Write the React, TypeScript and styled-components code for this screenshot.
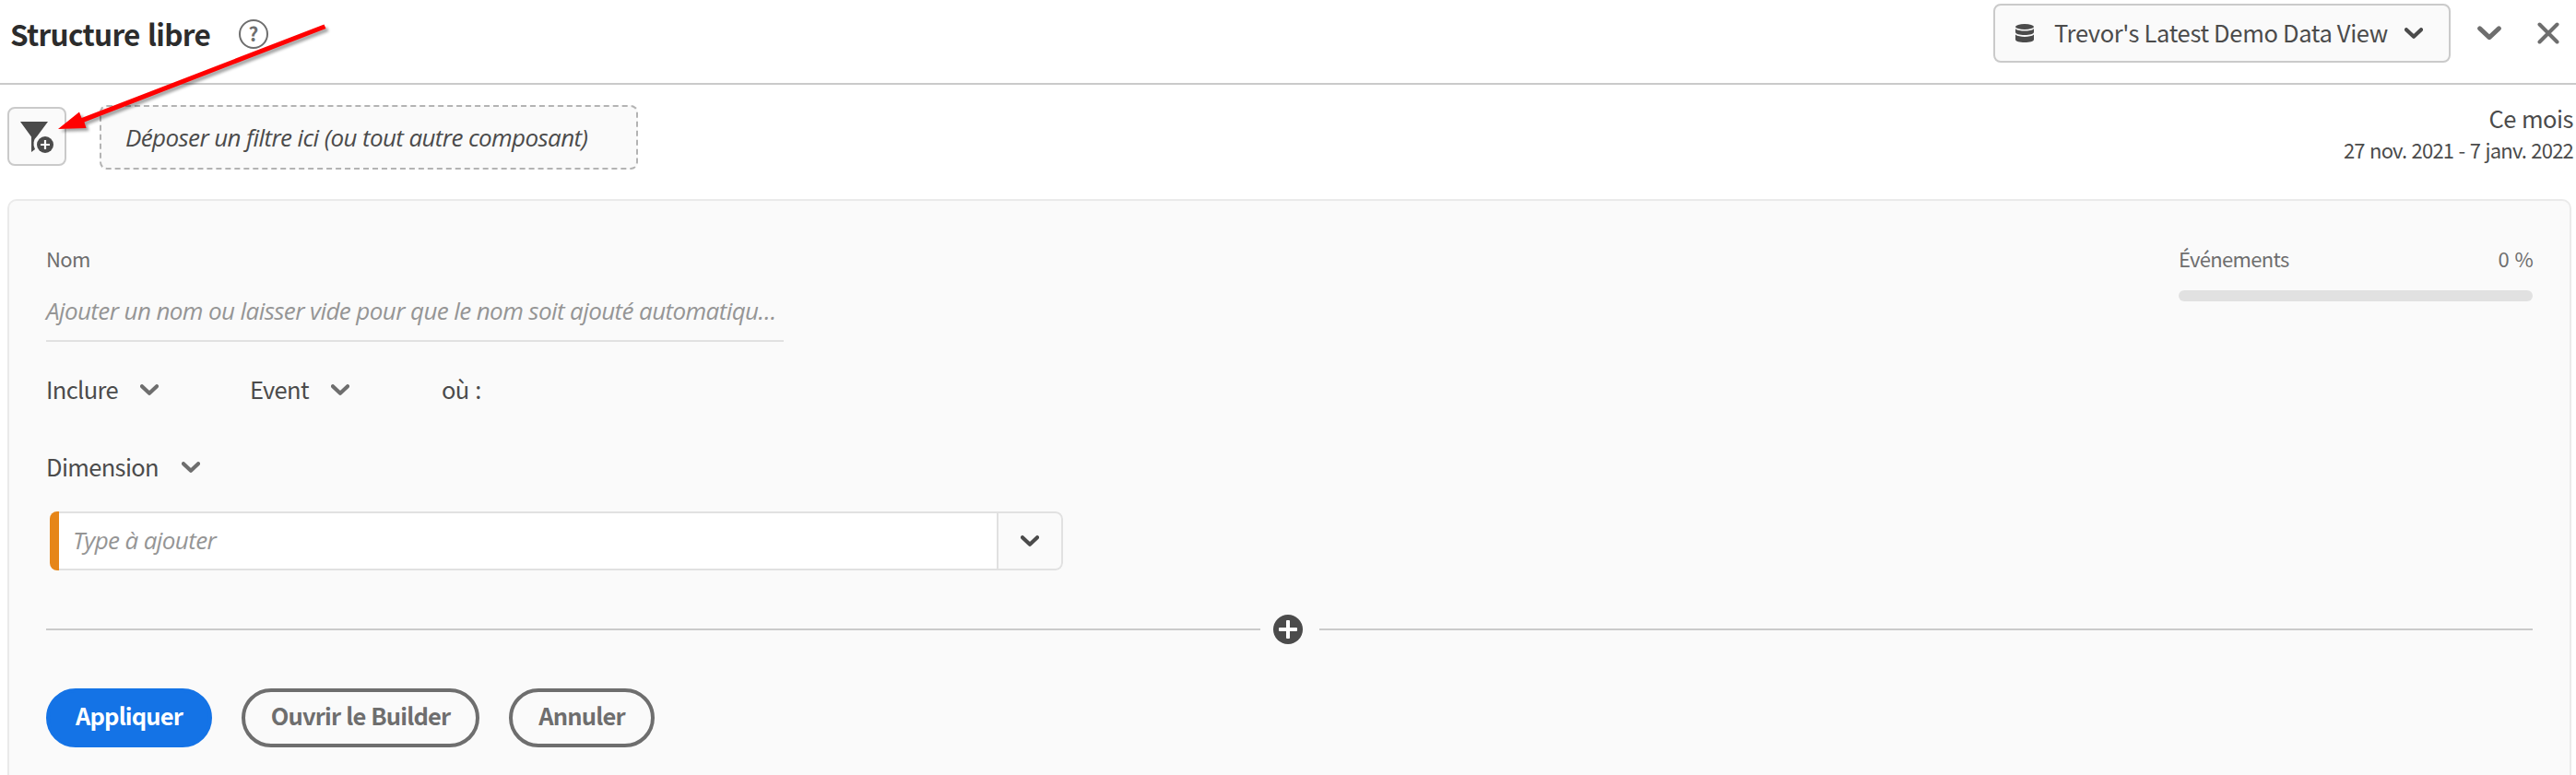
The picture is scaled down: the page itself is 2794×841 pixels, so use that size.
import React from 'react';
import styled, { createGlobalStyle, css } from 'styled-components';

const GlobalStyle = createGlobalStyle`
  *, *::before, *::after { box-sizing: border-box; }
  body {
    margin: 0;
    background: #fff;
    color: #4b4b4b;
    font-family: "Noto Sans CJK JP", "Noto Sans", sans-serif;
    overflow: hidden;
  }
  svg { display: block; flex: none; }
`;

const italicText = css`
  font-family: "Open Sans", "Noto Sans", sans-serif;
  font-size: 26px;
  font-style: italic;
  letter-spacing: -0.62px;
  white-space: nowrap;
`;

const Page = styled.div`
  position: relative;
  display: flex;
  flex-direction: column;
  height: 841px;
  overflow: hidden;
`;

const Header = styled.header`
  display: flex;
  align-items: center;
  height: 92px;
  padding: 4px 18px 22px 11px;
  border-bottom: 2px solid #cacaca;
`;

const Title = styled.h1`
  width: 218px;
  margin: 0;
  color: #2c2c2c;
  font-size: 31.5px;
  font-weight: 700;
  letter-spacing: -0.7px;
  word-spacing: 2px;
  line-height: 40px;
  white-space: nowrap;
`;

const Help = styled.span`
  display: flex;
  justify-content: center;
  width: 32px;
  height: 32px;
  margin: 2px 0 0 30px;
  border: 2px solid #6e6e6e;
  border-radius: 50%;
  color: #6e6e6e;
  font-size: 21px;
  font-weight: 700;
  line-height: 26px;
`;

const HeaderActions = styled.div`
  display: flex;
  align-items: center;
  margin-left: auto;
`;

const DataViewButton = styled.button`
  display: flex;
  align-items: center;
  width: 496px;
  height: 64px;
  margin-right: 29px;
  padding: 0 0 0 22px;
  border: 2px solid #cacaca;
  border-radius: 8px;
  background: #fafafa;
  color: #4b4b4b;
  font: inherit;
`;

const DataViewName = styled.span`
  width: 380px;
  margin: -3px 0 0 22px;
  font-size: 25.5px;
  letter-spacing: -0.33px;
  line-height: 40px;
  text-align: left;
  white-space: nowrap;
`;

const CloseSlot = styled.span`
  display: flex;
  margin-left: 39px;
`;

const FilterBar = styled.div`
  display: flex;
  align-items: flex-start;
  height: 124px;
  padding: 22px 3px 0 8px;
`;

const FilterButton = styled.button`
  display: flex;
  align-items: center;
  justify-content: center;
  width: 64px;
  height: 64px;
  margin-top: 2px;
  padding: 2px 0 0;
  border: 2px solid #cacaca;
  border-radius: 8px;
  background: #fafafa;
`;

const DropZone = styled.div`
  ${italicText}
  width: 584px;
  height: 70px;
  margin-left: 36px;
  padding-left: 26px;
  border: 2px dashed #b3b3b3;
  border-radius: 8px;
  background: #fafafa;
  line-height: 66px;
`;

const DateRange = styled.div`
  margin: -4px 0 0 auto;
  text-align: right;
  white-space: nowrap;
`;

const RangeName = styled.div`
  font-size: 25.5px;
  letter-spacing: -0.5px;
  word-spacing: 1px;
  line-height: 36px;
`;

const RangeDates = styled.div`
  font-size: 22px;
  letter-spacing: -0.8px;
  word-spacing: 1.2px;
  line-height: 33px;
`;

const Panel = styled.section`
  flex: 1;
  width: 2781px;
  margin-left: 8px;
  padding: 47px 40px 0;
  border: 2px solid #eaeaea;
  border-bottom: 0;
  border-radius: 10px 10px 0 0;
  background: #fafafa;
`;

const PanelTop = styled.div`
  display: flex;
  justify-content: space-between;
`;

const NameField = styled.div`
  width: 800px;
`;

const Label = styled.div`
  color: #6e6e6e;
  font-size: 22px;
  letter-spacing: -0.66px;
  word-spacing: 2px;
  line-height: 30px;
  white-space: nowrap;
`;

const NameInput = styled.div`
  ${italicText}
  height: 66px;
  margin-top: 10px;
  letter-spacing: -0.6px;
  border-bottom: 2px solid #e1e1e1;
  color: #959595;
  line-height: 64px;
`;

const Events = styled.div`
  width: 384px;
`;

const EventsHead = styled.div`
  display: flex;
  justify-content: space-between;
`;

const Meter = styled.div`
  height: 12px;
  margin-top: 20px;
  border-radius: 6px;
  background: #e1e1e1;
`;

const Row = styled.div<{ $gap: number }>`
  display: flex;
  margin-top: ${(p) => p.$gap}px;
`;

const Picker = styled.div<{ $width: number; $label: number }>`
  display: grid;
  grid-template-columns: ${(p) => p.$label}px 20px;
  align-items: center;
  width: ${(p) => p.$width}px;
  height: 40px;
  font-size: 25.5px;
  letter-spacing: -0.65px;
  word-spacing: 1.5px;
  line-height: 40px;
  white-space: nowrap;
  svg { margin-top: 2px; }
`;

const Combo = styled.div`
  display: flex;
  width: 1099px;
  height: 64px;
  margin: 29px 0 0 4px;
  border-radius: 8px;
  overflow: hidden;
`;

const ComboMark = styled.div`
  width: 10px;
  background: #e68619;
`;

const ComboInput = styled.div`
  ${italicText}
  flex: 1;
  padding-left: 15px;
  border: 2px solid #e1e1e1;
  border-width: 2px 0;
  background: #fff;
  color: #959595;
  line-height: 59px;
`;

const ComboToggle = styled.button`
  display: flex;
  align-items: center;
  justify-content: center;
  width: 72px;
  padding: 0;
  border: 2px solid #e1e1e1;
  border-radius: 0 8px 8px 0;
  background: #fafafa;
`;

const Divider = styled.div`
  display: grid;
  grid-template-columns: 1317px 32px 1fr;
  align-items: center;
  height: 32px;
  margin-top: 48px;
  svg { margin-left: 14px; }
`;

const Rule = styled.div<{ $start?: number }>`
  height: 2px;
  margin-left: ${(p) => p.$start ?? 0}px;
  background: #cacaca;
`;

const Actions = styled.div`
  display: flex;
  gap: 32px;
  margin-top: 48px;
`;

const ActionButton = styled.button<{ $primary?: boolean; $width: number }>`
  width: ${(p) => p.$width}px;
  height: 64px;
  padding: 0 0 7px;
  border: 4px solid ${(p) => (p.$primary ? '#1473e6' : '#6e6e6e')};
  border-radius: 32px;
  background: ${(p) => (p.$primary ? '#1473e6' : 'transparent')};
  color: ${(p) => (p.$primary ? '#fff' : '#6e6e6e')};
  font: inherit;
  font-size: 25.5px;
  font-weight: 700;
  letter-spacing: -0.84px;
  word-spacing: 1px;
  line-height: 40px;
  white-space: nowrap;
`;

const Annotation = styled.svg`
  position: absolute;
  top: 0;
  left: 40px;
  pointer-events: none;
  filter: drop-shadow(3px 3px 1.5px rgba(0, 0, 0, 0.35));
`;

const Chevron = ({ color = '#6e6e6e', size = 20 }: { color?: string; size?: number }) => (
  <svg width={size} height={size * 0.6} viewBox="0 0 20 12" fill="none">
    <path d="M2 2.200 10 9.700l8-7.500" stroke={color} strokeWidth={size > 20 ? 3.8 : 4.2} strokeLinecap="round" strokeLinejoin="round" />
  </svg>
);

const DatabaseIcon = () => (
  <svg width="20" height="20" viewBox="0 0 20 20" fill="#4b4b4b">
    <ellipse cx="10" cy="3" rx="10" ry="3" />
    <path d="M0 5.200C2 7 6 7.600 10 7.600S18 7 20 5.200V9c0 1.700-4.500 3-10 3S0 10.700 0 9z" />
    <path d="M0 11.500c2 1.800 6 2.400 10 2.400s8-.6 10-2.400V17c0 1.700-4.500 3-10 3S0 18.700 0 17z" />
  </svg>
);

const CloseIcon = () => (
  <svg width="24" height="24" viewBox="0 0 24 24">
    <path d="M2.500 2.500l19 19M21.500 2.500l-19 19" stroke="#6e6e6e" strokeWidth="4" strokeLinecap="round" />
  </svg>
);

const FilterAddIcon = () => (
  <svg width="36" height="34" viewBox="0 0 36 34">
    <path d="M0 0H30L18.500 15.500A11.500 11.500 0 0 0 16 30L12 33V16.500z" fill="#4b4b4b" />
    <circle cx="27" cy="25" r="9" fill="#4b4b4b" />
    <path d="M27 20v10M22 25h10" stroke="#fff" strokeWidth="2.200" />
  </svg>
);

const AddIcon = () => (
  <svg width="32" height="32" viewBox="0 0 32 32">
    <circle cx="16" cy="16" r="16" fill="#4b4b4b" />
    <rect x="6" y="14" width="20" height="4" rx="1" fill="#fff" />
    <rect x="14" y="6" width="4" height="20" rx="1" fill="#fff" />
  </svg>
);

export default function App() {
  return (
    <>
      <GlobalStyle />
      <Page lang="fr">
        <Header>
          <Title>Structure libre</Title>
          <Help>?</Help>
          <HeaderActions>
            <DataViewButton>
              <DatabaseIcon />
              <DataViewName>Trevor's Latest Demo Data View</DataViewName>
              <Chevron color="#4b4b4b" />
            </DataViewButton>
            <Chevron size={26} />
            <CloseSlot>
              <CloseIcon />
            </CloseSlot>
          </HeaderActions>
        </Header>

        <FilterBar>
          <FilterButton aria-label="Ajouter un filtre">
            <FilterAddIcon />
          </FilterButton>
          <DropZone>Déposer un filtre ici (ou tout autre composant)</DropZone>
          <DateRange>
            <RangeName>Ce mois</RangeName>
            <RangeDates>27 nov. 2021 - 7 janv. 2022</RangeDates>
          </DateRange>
        </FilterBar>

        <Panel>
          <PanelTop>
            <NameField>
              <Label>Nom</Label>
              <NameInput>Ajouter un nom ou laisser vide pour que le nom soit ajouté automatiqu…</NameInput>
            </NameField>
            <Events>
              <EventsHead>
                <Label>Événements</Label>
                <Label>0 %</Label>
              </EventsHead>
              <Meter />
            </Events>
          </PanelTop>

          <Row $gap={31}>
            <Picker $width={221} $label={102}>
              Inclure
              <Chevron />
            </Picker>
            <Picker $width={208} $label={88}>
              Event
              <Chevron />
            </Picker>
            <Picker $width={60} $label={44}>où :</Picker>
          </Row>
          <Row $gap={44}>
            <Picker $width={200} $label={147}>
              Dimension
              <Chevron />
            </Picker>
          </Row>

          <Combo>
            <ComboMark />
            <ComboInput>Type à ajouter</ComboInput>
            <ComboToggle aria-label="Ouvrir la liste">
              <Chevron color="#4b4b4b" />
            </ComboToggle>
          </Combo>

          <Divider>
            <Rule />
            <AddIcon />
            <Rule $start={32} />
          </Divider>

          <Actions>
            <ActionButton $primary $width={180}>Appliquer</ActionButton>
            <ActionButton $width={258}>Ouvrir le Builder</ActionButton>
            <ActionButton $width={158}>Annuler</ActionButton>
          </Actions>
        </Panel>

        <Annotation width="330" height="170" viewBox="40 0 330 170">
          <path d="M351.500 26.500l2 4.500L91.500 132.500l2 6.500L63 140l23-18.500 2.500 6.500z" fill="#f00" />
        </Annotation>
      </Page>
    </>
  );
}
